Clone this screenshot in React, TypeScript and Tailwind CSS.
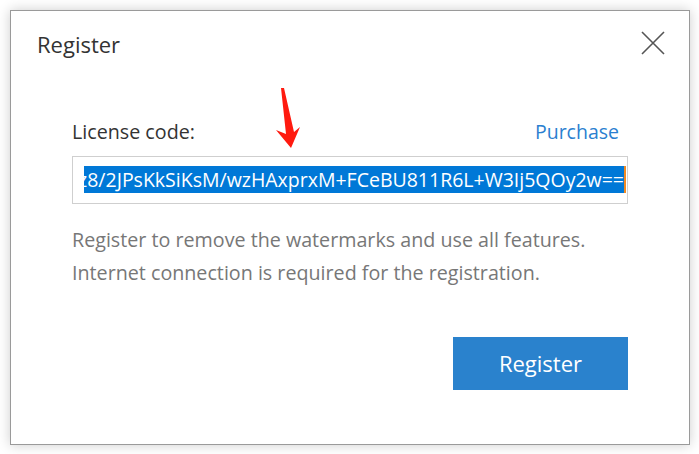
import React from "react";

export default function App() {
  const font = { fontFamily: '"Open Sans", "Noto Sans", sans-serif' };
  return (
    <div className="w-[699px] h-[454px] bg-white pl-[10px] pt-[10px]" style={font}>
      <div className="relative w-[680px] h-[435px] bg-white border border-[#9a9a9a] shadow-[0_0_12px_rgba(0,0,0,0.2)] flex flex-col">
        <div className="flex items-start justify-between pl-[26px] pr-[24px] pt-[17.5px]">
          <div className="text-[22px] leading-[30px] text-[#333]">Register</div>
          <svg width="24" height="24" viewBox="0 0 24 24" className="mt-[2.5px]">
            <path d="M1 1 L23 23 M23 1 L1 23" stroke="#555" strokeWidth="1.6" fill="none" />
          </svg>
        </div>
        <div className="flex flex-col pl-[61px] pr-[61px] mt-[60.8px]">
          <div className="flex items-end justify-between">
            <div className="text-[19.7px] leading-[26px] text-[#333]">License code:</div>
            <div className="text-[19.5px] leading-[26px] text-[#2b7fd0] mr-[9px]">Purchase</div>
          </div>
          <div className="mt-[10.7px] h-[48px] border border-[#cfcfcf] flex items-center pl-[11px] pr-[1px]">
            <div className="flex-1 h-[27px] overflow-hidden flex justify-end">
              <span className="whitespace-nowrap bg-[#0078d7] text-white text-[19.5px] leading-[27px] shrink-0">
                Nz8/2JPsKkSiKsM/wzHAxprxM+FCeBU811R6L+W3Ij5QOy2w==
              </span>
            </div>
            <div className="w-[2px] h-[27px] bg-[#f08a24]" />
          </div>
          <div className="mt-[18.8px] text-[19.7px] leading-[33px] text-[#777]">
            <div>Register to remove the watermarks and use all features.</div>
            <div>Internet connection is required for the registration.</div>
          </div>
          <div className="flex justify-end mt-[48.2px]">
            <button className="w-[175px] h-[53px] bg-[#2a82cd] text-white text-[22px]">Register</button>
          </div>
        </div>
        <svg className="absolute left-[254px] top-[66px]" width="40" height="72" viewBox="265 77 40 72">
          <polygon points="281,88 284,88 294,132 300,127 291,148 276,130 286,134" fill="#ff1a0f" />
        </svg>
      </div>
    </div>
  );
}
